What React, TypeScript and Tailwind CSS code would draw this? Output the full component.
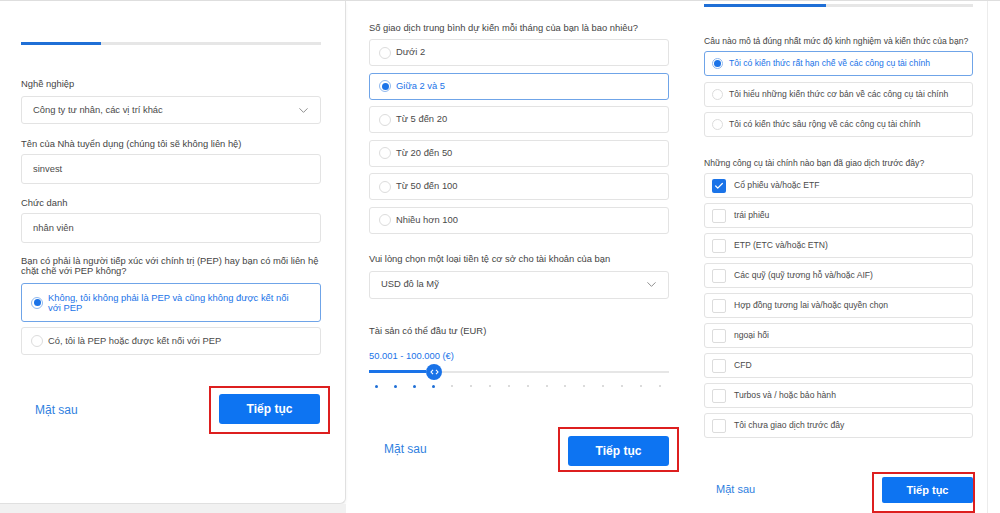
import { ChevronDown, Check } from "lucide-react";

const font = { fontFamily: '"Liberation Sans", Arial, sans-serif' };

const Radio = ({ on, s }: { on?: boolean; s: string }) =>
  on ? (
    <span className={`flex shrink-0 items-center justify-center rounded-full border border-[#8fb8ee] bg-white ${s}`}>
      <span className="h-[70%] w-[70%] rounded-full bg-[#1a73e8]" />
    </span>
  ) : (
    <span className={`shrink-0 rounded-full border border-[#dcdcdc] bg-white ${s}`} />
  );

const Box = ({ on }: { on?: boolean }) =>
  on ? (
    <span className="flex h-[14px] w-[14px] shrink-0 items-center justify-center rounded-[2px] bg-[#1a73e8]">
      <Check className="h-[10px] w-[10px] text-white" strokeWidth={3} />
    </span>
  ) : (
    <span className="h-[14px] w-[14px] shrink-0 rounded-[2px] border border-[#dcdcdc] bg-white" />
  );

const Option = ({ label, on, h, small }: { label: string; on?: boolean; h: string; small?: boolean }) => (
  <div
    className={`flex items-center rounded-[3px] border ${h} ${
      small ? "gap-[6px] px-[7px] text-[8.6px]" : "gap-[5px] px-[9px] text-[9.4px]"
    } ${on ? "border-[#6fa4e8] text-[#1a73e8]" : "border-[#e3e3e3] text-[#4a4a4a]"}`}
  >
    <Radio on={on} s={small ? "h-[11px] w-[11px]" : "h-[12px] w-[12px]"} />
    <span>{label}</span>
  </div>
);

const Select = ({ value }: { value: string }) => (
  <div className="flex h-[28px] items-center justify-between rounded-[3px] border border-[#e3e3e3] pl-[11px] pr-[9px] text-[9.4px] text-[#4a4a4a]">
    <span>{value}</span>
    <ChevronDown className="h-[15px] w-[15px] text-[#888]" strokeWidth={1.5} />
  </div>
);

const Input = ({ value }: { value: string }) => (
  <div className="flex h-[30px] items-center rounded-[3px] border border-[#e3e3e3] px-[11px] text-[9.4px] text-[#4a4a4a]">
    {value}
  </div>
);

const Label = ({ children, mt }: { children: React.ReactNode; mt: string }) => (
  <div className={`text-[9.4px] leading-[14px] text-[#444] ${mt}`}>{children}</div>
);

const instruments = [
  ["Cổ phiếu và/hoặc ETF", true],
  ["trái phiếu", false],
  ["ETP (ETC và/hoặc ETN)", false],
  ["Các quỹ (quỹ tương hỗ và/hoặc AIF)", false],
  ["Hợp đồng tương lai và/hoặc quyền chọn", false],
  ["ngoại hối", false],
  ["CFD", false],
  ["Turbos và / hoặc bảo hành", false],
  ["Tôi chưa giao dịch trước đây", false],
] as const;

export default function App() {
  return (
    <div className="flex h-[513px] w-[1000px] overflow-hidden border-t border-[#dedede] bg-white text-[#444]" style={font}>
      {/* panel 1 */}
      <div className="flex w-[350px] shrink-0 flex-col">
        <div className="flex h-[503px] w-[346px] flex-col rounded-br-[6px] border-r border-b border-[#e0e0e0] bg-white pl-[21px] pr-[24px] shadow-[0_2px_3px_rgba(0,0,0,0.06)]">
          <div className="mt-[41px] flex h-[3px] bg-[#e6e6e6]">
            <div className="w-[80px] bg-[#1f6fd6]" />
          </div>
          <Label mt="mt-[32px]">Nghề nghiệp</Label>
          <div className="mt-[5px]">
            <Select value="Công ty tư nhân, các vị trí khác" />
          </div>
          <Label mt="mt-[13px]">Tên của Nhà tuyển dụng (chúng tôi sẽ không liên hệ)</Label>
          <div className="mt-[3px]">
            <Input value="sinvest" />
          </div>
          <Label mt="mt-[12px]">Chức danh</Label>
          <div className="mt-[3px]">
            <Input value="nhân viên" />
          </div>
          <div className="mt-[13px] whitespace-nowrap text-[9.4px] leading-[10px]">
            Bạn có phải là người tiếp xúc với chính trị (PEP) hay bạn có mối liên hệ
            <br />
            chặt chẽ với PEP không?
          </div>
          <div className="mt-[7px] flex h-[39px] items-center gap-[5px] rounded-[3px] border border-[#6fa4e8] px-[9px] text-[9.4px] leading-[10px] text-[#1a73e8]">
            <Radio on s="h-[12px] w-[12px]" />
            <span>
              Không, tôi không phải là PEP và cũng không được kết nối
              <br />
              với PEP
            </span>
          </div>
          <div className="mt-[5px]">
            <Option label="Có, tôi là PEP hoặc được kết nối với PEP" h="h-[28px]" />
          </div>
          <div className="mt-[31px] -mr-[9px] flex items-center justify-between pl-[14px]">
            <span className="text-[12px] text-[#2f7fe0]">Mặt sau</span>
            <div className="border-2 border-[#dd1f1f] px-[8px] pt-[6px] pb-[8px]">
              <button className="flex h-[30px] w-[101px] items-center justify-center rounded-[3px] bg-[#0d74f2] text-[12px] font-semibold text-white">
                Tiếp tục
              </button>
            </div>
          </div>
        </div>
        <div className="w-[346px] flex-1 bg-[#f1f1f1]" />
      </div>

      {/* panel 2 */}
      <div className="flex w-[336px] shrink-0 flex-col pl-[19px] pr-[17px]">
        <Label mt="mt-[20px]">Số giao dịch trung bình dự kiến mỗi tháng của bạn là bao nhiêu?</Label>
        <div className="mt-[4px] flex flex-col gap-[6.5px]">
          <Option label="Dưới 2" h="h-[27px]" />
          <Option label="Giữa 2 và 5" on h="h-[27px]" />
          <Option label="Từ 5 đến 20" h="h-[27px]" />
          <Option label="Từ 20 đến 50" h="h-[27px]" />
          <Option label="Từ 50 đến 100" h="h-[27px]" />
          <Option label="Nhiều hơn 100" h="h-[27px]" />
        </div>
        <Label mt="mt-[18px]">Vui lòng chọn một loại tiền tệ cơ sở cho tài khoản của bạn</Label>
        <div className="mt-[5px]">
          <Select value="USD đô la Mỹ" />
        </div>
        <Label mt="mt-[25px]">Tài sản có thể đầu tư (EUR)</Label>
        <div className="mt-[11px] text-[9.4px] leading-[14px] text-[#1a73e8]">50.001 - 100.000 (€)</div>
        <div className="mt-[1px] flex h-[16px] items-center">
          <div className="h-[3px] w-[57px] bg-[#1a73e8]" />
          <div className="flex h-[16px] w-[16px] shrink-0 items-center justify-center rounded-full bg-[#1a73e8]">
            <svg width="9" height="6" viewBox="0 0 9 6" fill="none" stroke="white" strokeWidth="1.1">
              <path d="M3 0.8 L1 3 L3 5.2" />
              <path d="M6 0.8 L8 3 L6 5.2" />
            </svg>
          </div>
          <div className="h-[2px] flex-1 bg-[#e6e6e6]" />
        </div>
        <div className="mt-[5px] -ml-[1.5px] flex items-center">
          {Array.from({ length: 16 }).map((_, i) => (
            <span key={i} className="flex w-[19px] justify-center">
              <span
                className={i < 4 ? "h-[3px] w-[3px] rounded-full bg-[#1f6fd6]" : "h-[2px] w-[2px] rounded-full bg-[#cfcfcf]"}
              />
            </span>
          ))}
        </div>
        <div className="mt-[39px] -mr-[10px] flex items-center justify-between pl-[15px]">
          <span className="text-[12px] text-[#2f7fe0]">Mặt sau</span>
          <div className="border-2 border-[#dd1f1f] px-[8px] pt-[7px] pb-[4px]">
            <button className="flex h-[30px] w-[101px] items-center justify-center rounded-[3px] bg-[#0d74f2] text-[12px] font-semibold text-white">
              Tiếp tục
            </button>
          </div>
        </div>
      </div>

      {/* panel 3 */}
      <div className="flex w-[302px] shrink-0 flex-col border-r border-[#ececec] pl-[18px] pr-[14px]">
        <div className="mt-[3px] flex h-[3px] bg-[#e6e6e6]">
          <div className="w-[122px] bg-[#1f6fd6]" />
        </div>
        <div className="mt-[27px] text-[8.6px] leading-[14px]">
          Câu nào mô tả đúng nhất mức độ kinh nghiệm và kiến thức của bạn?
        </div>
        <div className="mt-[3px] flex flex-col gap-[5.5px]">
          <Option small label="Tôi có kiến thức rất hạn chế về các công cụ tài chính" on h="h-[25px]" />
          <Option small label="Tôi hiểu những kiến thức cơ bản về các công cụ tài chính" h="h-[25px]" />
          <Option small label="Tôi có kiến thức sâu rộng về các công cụ tài chính" h="h-[25px]" />
        </div>
        <div className="mt-[19px] text-[8.6px] leading-[14px]">
          Những công cụ tài chính nào bạn đã giao dịch trước đây?
        </div>
        <div className="mt-[3px] flex flex-col gap-[5px]">
          {instruments.map(([label, on]) => (
            <div
              key={label}
              className="flex h-[25px] items-center gap-[8px] rounded-[3px] border border-[#e3e3e3] px-[7px] text-[8.6px] text-[#4a4a4a]"
            >
              <Box on={on} />
              <span>{label}</span>
            </div>
          ))}
        </div>
        <div className="mt-[34px] -mr-[2px] flex items-center justify-between pl-[12px]">
          <span className="-mt-[6px] text-[11px] text-[#2f7fe0]">Mặt sau</span>
          <div className="border-2 border-[#dd1f1f] pl-[8px] pt-[3px] pb-[8px]">
            <button className="flex h-[26px] w-[91px] items-center justify-center rounded-[2px] bg-[#0d74f2] text-[11px] font-semibold text-white">
              Tiếp tục
            </button>
          </div>
        </div>
      </div>
      <div className="flex-1 bg-white" />
    </div>
  );
}
